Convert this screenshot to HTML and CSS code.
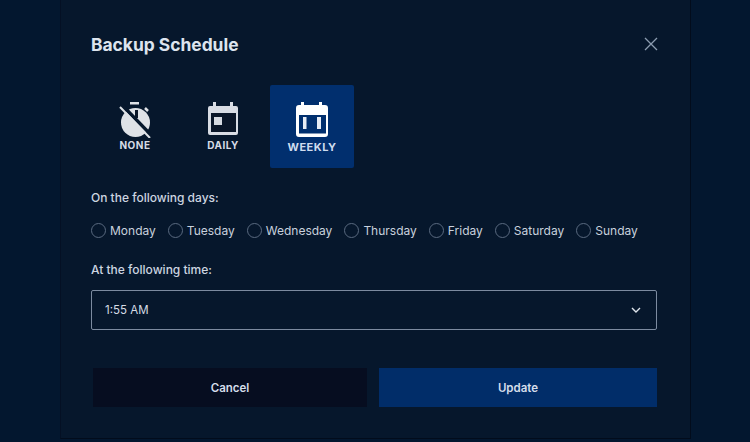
FILE: index.html
```html
<!DOCTYPE html>
<html lang="en">
<head>
    <meta charset="UTF-8">
    <meta name="viewport" content="width=device-width, initial-scale=1.0">
    <title>Backup Schedule</title>
    <link rel="stylesheet" href="styles.css">
</head>
<body>
    <div class="modal">
        <div class="modal-header">
            <h2>Backup Schedule</h2>
            <button class="close-btn" aria-label="Close">
                <svg width="14" height="14" viewBox="0 0 14 14" fill="none" stroke="#8c9cb0" stroke-width="1.3">
                    <path d="M1 1l12 12M13 1L1 13"/>
                </svg>
            </button>
        </div>

        <div class="tabs">
            <div class="tab">
                <svg class="tab-icon icon-none" width="32" height="36" viewBox="0 0 32 36">
                    <rect x="11" y="0" width="9" height="2.5" fill="#dfe2e7"/>
                    <circle cx="16.5" cy="20.5" r="14.5" fill="#dfe2e7"/>
                    <rect x="16" y="8" width="3" height="8" fill="#0a1628"/>
                    <path d="M26 6l3 3" stroke="#dfe2e7" stroke-width="2.5"/>
                    <path d="M3 3l30 31" stroke="#06172c" stroke-width="3.5"/>
                    <path d="M1 5l30 31" stroke="#dfe2e7" stroke-width="2"/>
                </svg>
                <span>NONE</span>
            </div>
            <div class="tab">
                <svg class="tab-icon" width="30" height="34" viewBox="0 0 30 34">
                    <path d="M2 4h3V0h3v4h14V0h3v4h3a2 2 0 0 1 2 2v25a2 2 0 0 1-2 2H2a2 2 0 0 1-2-2V6a2 2 0 0 1 2-2z" fill="#d8dce4"/>
                    <rect x="3" y="11" width="25" height="19" fill="#0a1628"/>
                    <rect x="6" y="15" width="8" height="8" fill="#d6dae1"/>
                </svg>
                <span>DAILY</span>
            </div>
            <div class="tab active">
                <svg class="tab-icon" width="32" height="36" viewBox="0 0 32 36">
                    <path d="M3 4h2V1h3v3h15V1h3v3h3a3 3 0 0 1 3 3v26a3 3 0 0 1-3 3H3a3 3 0 0 1-3-3V7a3 3 0 0 1 3-3z" fill="#fff"/>
                    <rect x="3" y="14" width="27" height="18.500" fill="#012f6e"/>
                    <rect x="7" y="16" width="3.500" height="12" fill="#e6ecf5"/>
                    <rect x="21" y="16" width="4" height="12" fill="#e6ecf5"/>
                </svg>
                <span>WEEKLY</span>
            </div>
        </div>

        <p class="field-label">On the following days:</p>
        <div class="days">
            <label class="day"><span class="radio"></span>Monday</label>
            <label class="day"><span class="radio"></span>Tuesday</label>
            <label class="day"><span class="radio"></span>Wednesday</label>
            <label class="day"><span class="radio"></span>Thursday</label>
            <label class="day"><span class="radio"></span>Friday</label>
            <label class="day"><span class="radio"></span>Saturday</label>
            <label class="day"><span class="radio"></span>Sunday</label>
        </div>

        <p class="field-label time-label">At the following time:</p>
        <div class="select">
            <span>1:55 AM</span>
            <svg width="10" height="6" viewBox="0 0 10 6" fill="none" stroke="#dfe5ec" stroke-width="1.4">
                <path d="M1 1l4 4 4-4"/>
            </svg>
        </div>

        <div class="actions">
            <button class="btn btn-cancel">Cancel</button>
            <button class="btn btn-update">Update</button>
        </div>
    </div>
</body>
</html>
```

FILE: styles.css
```css
body {
    margin: 0;
    height: 442px;
    overflow: hidden;
    background-color: #03172f;
    font-family: Inter, "Liberation Sans", sans-serif;
    color: #d5dce6;
}
.modal {
    box-sizing: border-box;
    width: 631px;
    height: 439px;
    margin-left: 60px;
    padding: 34px 33px 0 30px;
    background-color: #06172c;
    border-left: 1px solid #041024;
    border-right: 1px solid #020c1c;
    border-bottom: 1px solid #020c1c;
}
.modal-header {
    display: flex;
    justify-content: space-between;
    align-items: center;
    height: 20px;
}
h2 {
    margin: 0;
    font-size: 17.4px;
    font-weight: 700;
    color: #dde4ee;
}
.close-btn {
    display: flex;
    padding: 0;
    margin-right: -1px;
    background: none;
    border: none;
}
.tabs {
    display: flex;
    gap: 4px;
    margin: 31px 0 0 2px;
}
.tab {
    display: flex;
    flex-direction: column;
    align-items: center;
    box-sizing: border-box;
    width: 84px;
    height: 83px;
    padding-top: 17px;
    font-size: 10px;
    font-weight: 700;
    letter-spacing: 0.5px;
    color: #d6dce6;
}
.tab span {
    margin-top: 3px;
}
.icon-none {
    margin-bottom: -2px;
}
.tab.active {
    margin-left: 1px;
    padding-top: 16px;
    border-radius: 2px;
    background-color: #012f6e;
    font-size: 11px;
    letter-spacing: 0.5px;
    color: #cfdcef;
}
.field-label {
    margin: 0;
    font-size: 12px;
    font-weight: 500;
    line-height: 16px;
    color: #cdd5e0;
}
.tabs + .field-label {
    margin-top: 22px;
}
.days {
    display: flex;
    gap: 12px;
    margin-top: 17px;
    font-size: 12px;
    color: #c8d1dd;
}
.day {
    display: flex;
    align-items: center;
    gap: 4px;
}
.radio {
    box-sizing: border-box;
    width: 15px;
    height: 15px;
    border: 1px solid #5a6a80;
    border-radius: 50%;
}
.time-label {
    margin-top: 24px;
}
.select {
    display: flex;
    justify-content: space-between;
    align-items: center;
    box-sizing: border-box;
    height: 40px;
    margin-top: 12px;
    padding: 0 15px 0 13px;
    border: 1px solid #7c8ba0;
    border-radius: 2px;
    font-size: 11.5px;
    color: #d5dce6;
}
.actions {
    display: flex;
    gap: 12px;
    margin-top: 38px;
    padding-left: 2px;
}
.btn {
    height: 39px;
    padding: 0;
    border: none;
    font-family: inherit;
    font-size: 11.5px;
    font-weight: 600;
    color: #d5deeb;
}
.btn-cancel {
    width: 274px;
    background-color: #060d20;
}
.btn-update {
    flex: 1;
    background-color: #012d69;
}
```
